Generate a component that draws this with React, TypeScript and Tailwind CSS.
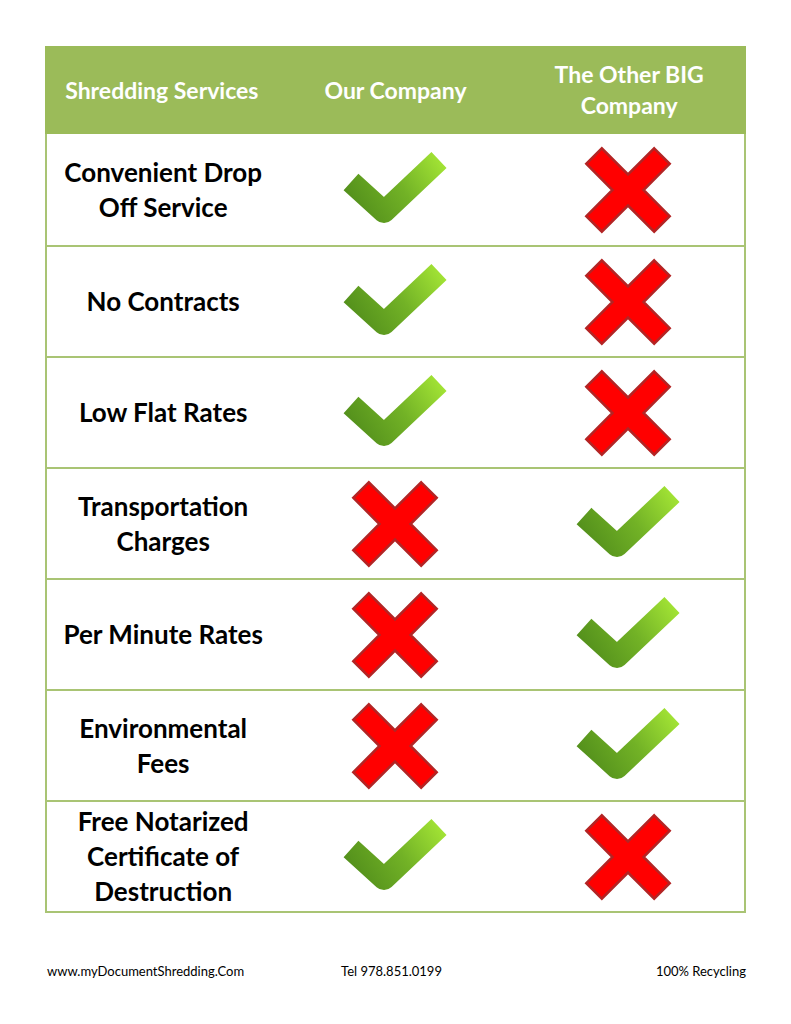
import React from 'react';

type Mark = 'yes' | 'no';

const rows: { label: React.ReactNode; ours: Mark; theirs: Mark }[] = [
  { label: <>Convenient Drop<br />Off Service</>, ours: 'yes', theirs: 'no' },
  { label: <>No Contracts</>, ours: 'yes', theirs: 'no' },
  { label: <>Low Flat Rates</>, ours: 'yes', theirs: 'no' },
  { label: <>Transportation<br />Charges</>, ours: 'no', theirs: 'yes' },
  { label: <>Per Minute Rates</>, ours: 'no', theirs: 'yes' },
  { label: <>Environmental<br />Fees</>, ours: 'no', theirs: 'yes' },
  { label: <>Free Notarized<br />Certificate of<br />Destruction</>, ours: 'yes', theirs: 'no' },
];

function Check({ id }: { id: string }) {
  return (
    <svg width="110" height="86" viewBox="0 0 110 86">
      <defs>
        <linearGradient id={id} x1="10" y1="70" x2="100" y2="10" gradientUnits="userSpaceOnUse">
          <stop offset="0" stopColor="#4e8a1a" />
          <stop offset="0.55" stopColor="#72b226" />
          <stop offset="1" stopColor="#a3e435" />
        </linearGradient>
      </defs>
      <path
        d="M11 35 L44 65 L99 13"
        fill="none"
        stroke={`url(#${id})`}
        strokeWidth="22"
        strokeLinejoin="round"
      />
    </svg>
  );
}

function Cross() {
  const L = 48;
  const w = 11;
  const pts = [
    [-w, -L], [w, -L], [w, -w], [L, -w], [L, w], [w, w],
    [w, L], [-w, L], [-w, w], [-L, w], [-L, -w], [-w, -w],
  ]
    .map(([x, y]) => `${x},${y}`)
    .join(' ');
  return (
    <svg width="90" height="90" viewBox="-45 -45 90 90">
      <polygon points={pts} transform="rotate(45)" fill="#ff0000" stroke="#b32424" strokeWidth="2.5" />
    </svg>
  );
}

export default function App() {
  return (
    <div className="w-[791px] h-[1024px] bg-white pt-[46px] px-[45px]" style={{ fontFamily: 'Lato, "Open Sans", sans-serif' }}>
      {/* Comparison table */}
      <div className="border-2 border-t-0 border-[#a9c474]">
        {/* Header */}
        <div className="grid grid-cols-3 h-[88px] bg-[#9bbb59] text-white font-bold text-[23px] leading-[31px] -mx-[2px]">
          <div className="flex items-center justify-center text-center">Shredding Services</div>
          <div className="flex items-center justify-center text-center">Our Company</div>
          <div className="flex items-center justify-center text-center">
            The Other BIG<br />Company
          </div>
        </div>

        {/* Rows */}
        {rows.map((row, i) => (
          <div
            key={i}
            className={`grid grid-cols-3 h-[111px] ${i > 0 ? 'border-t-2 border-[#a9c474]' : ''}`}
          >
            <div className="flex items-center justify-center text-center font-bold text-[26px] leading-[35px] text-black">
              {row.label}
            </div>
            <div className="flex items-center justify-center">
              {row.ours === 'yes' ? <Check id={`g-o-${i}`} /> : <Cross />}
            </div>
            <div className="flex items-center justify-center">
              {row.theirs === 'yes' ? <Check id={`g-t-${i}`} /> : <Cross />}
            </div>
          </div>
        ))}
      </div>

      {/* Footer */}
      <div className="flex items-center justify-between mt-[49px] text-[13px] text-black pl-[2px]">
        <span className="w-[240px]">www.myDocumentShredding.Com</span>
        <span className="pr-[10px]">Tel 978.851.0199</span>
        <span className="w-[240px] text-right">100% Recycling</span>
      </div>
    </div>
  );
}
